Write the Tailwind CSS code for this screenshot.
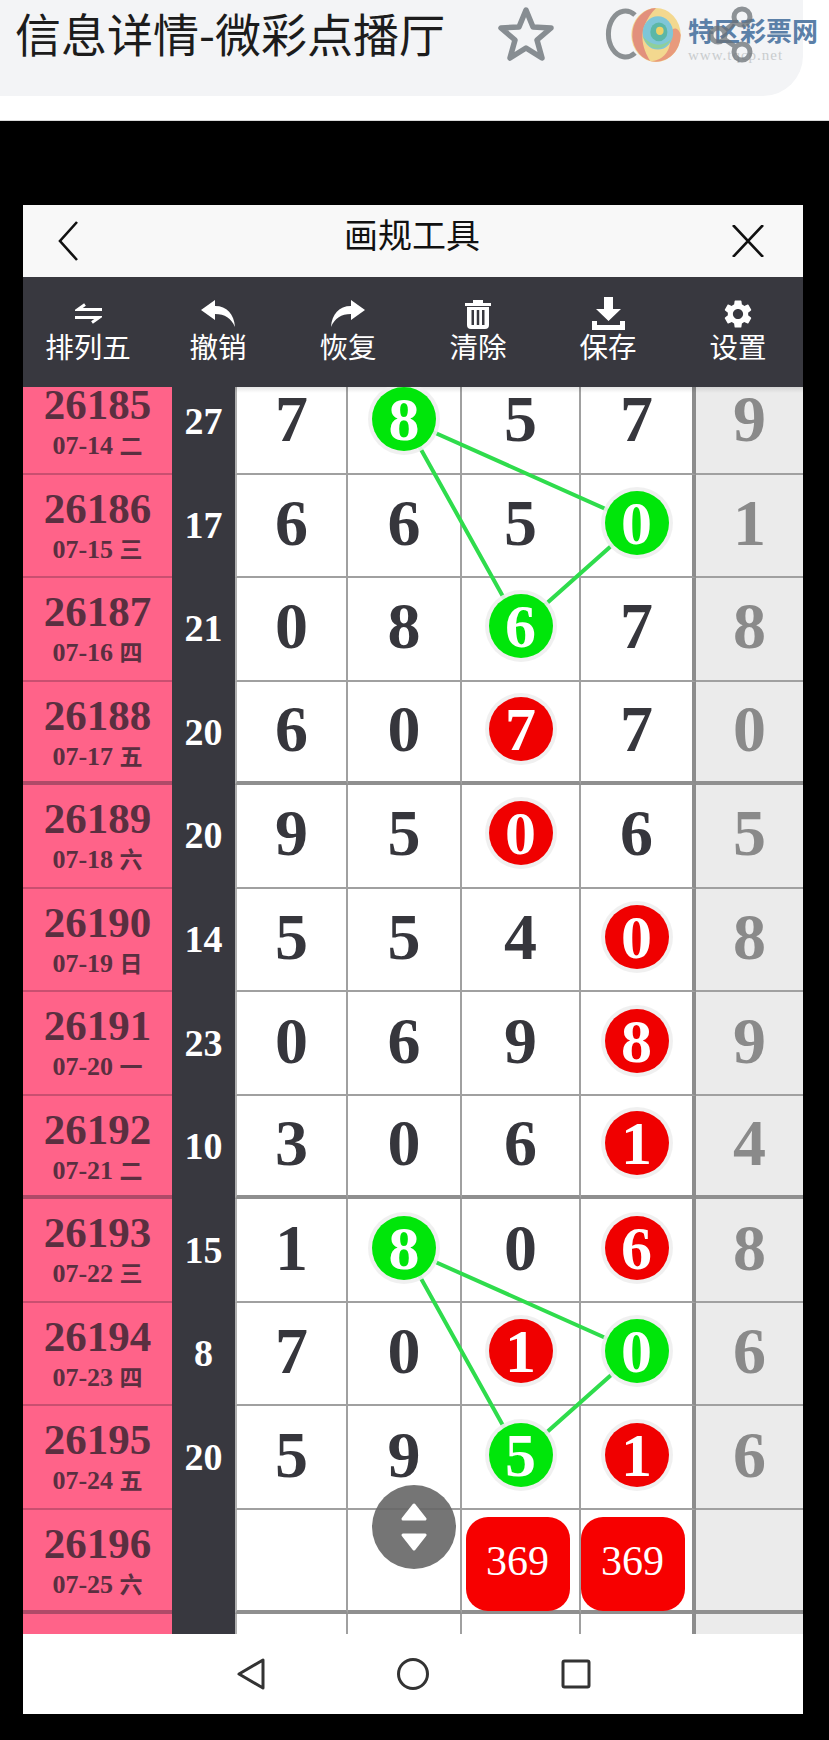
<!DOCTYPE html>
<html lang="zh-CN">
<head>
    <meta charset="UTF-8">
    <title>画规工具</title>
    <script src="https://cdn.jsdelivr.net/npm/@tailwindcss/browser@4"></script>
</head>
<body class="bg-black w-[829px] h-[1740px] overflow-hidden font-['Noto_Sans_CJK_SC',sans-serif]">
    <!-- browser top bar -->
    <div class="bg-white h-[121px] border-b border-[#d9d9d9]">
        <div class="relative bg-[#f3f4f6] h-[96px] w-[803px] rounded-br-[40px] flex items-start">
            <h1 class="shrink-0 ml-[15px] w-[470px] text-[46px] leading-[64px] text-[#1c1c1c] whitespace-nowrap">信息详情-微彩点播厅</h1>
            <svg class="shrink-0 mt-[6px] ml-[12px] w-[58px] h-[56px]" viewBox="0 0 58 56" fill="none" stroke="#878d92" stroke-width="5.5" stroke-linejoin="round">
                <path d="M29 4 L36 21 L54 22 L40 34 L45 52 L29 42 L13 52 L18 34 L4 22 L22 21 Z"/>
            </svg>
            <!-- logo -->
            <svg class="shrink-0 mt-[6px] ml-[47px] w-[86px] h-[58px]" viewBox="0 0 86 58" fill="none">
                <path d="M33 9 A17 23 0 1 0 33 47" stroke="#8b9093" stroke-width="5"/>
                <g transform="translate(54 29) scale(.95 1.04) translate(-56 -29)">
                    <circle cx="56" cy="29" r="26" fill="#f3d88f"/>
                    <path d="M56 3 A26 26 0 0 0 50 54 C42 42 34 24 56 3" fill="#e2907c"/>
                    <path d="M82 29 A26 26 0 0 1 50 54 C64 54 74 42 70 28 C74 20 80 22 82 29" fill="#e89a7c"/>
                    <circle cx="58" cy="27" r="16" fill="#7fc6d8"/>
                    <path d="M42 30 C48 46 66 46 74 30 C68 40 52 42 42 30" fill="#8fcf9a"/>
                    <circle cx="59" cy="26" r="9" fill="#5cb7a6"/>
                    <circle cx="60" cy="25" r="4" fill="#efd267"/>
                </g>
            </svg>
            <div class="shrink-0 mt-[14px] flex flex-col">
                <span class="text-[26px] leading-[32px] font-bold text-[#5b80a8] whitespace-nowrap">特区彩票网</span>
                <span class="text-[15px] leading-[18px] tracking-[1px] text-[#c9ccce] font-['Liberation_Serif',serif]">www.tqcp.net</span>
            </div>
            <!-- share icon sits over the logo -->
            <svg class="absolute left-[708px] top-[5px] w-[50px] h-[60px] opacity-75" viewBox="0 0 50 60" fill="none" stroke="#6c7277" stroke-width="5">
                <circle cx="34" cy="12" r="8"/>
                <circle cx="34" cy="47" r="8"/>
                <circle cx="10" cy="30" r="7"/>
                <path d="M16 26 L28 17 M16 34 L28 42"/>
            </svg>
        </div>
    </div>

    <!-- modal -->
    <div class="mt-[84px] ml-[23px] w-[780px]">
        <div class="h-[72px] bg-[#f8f8f8] flex items-center justify-between pl-[34px] pr-[39px]">
            <svg class="w-[22px] h-[40px]" viewBox="0 0 22 40" fill="none" stroke="#111" stroke-width="2.6"><path d="M20 1 L3 20 L20 39"/></svg>
            <span class="text-[34px] leading-[44px] text-[#111] -mt-[15px] ml-[13px]">画规工具</span>
            <svg class="w-[32px] h-[32px]" viewBox="0 0 32 32" fill="none" stroke="#111" stroke-width="2.6"><path d="M1 0 L31 32 M31 0 L1 32"/></svg>
        </div>

        <div class="h-[110px] bg-[#38383f] grid grid-cols-6 pt-[19px] text-white text-[28.5px] leading-[30px]">
            <div class="flex flex-col items-center">
                <div class="h-[35px] flex items-center">
                    <svg class="w-[27px] h-[21px]" viewBox="0 0 27 21" fill="none" stroke="#fff" stroke-width="3"><path d="M27 6.5 H3 L10 1.5 M0 14.5 H24 L17 19.5"/></svg>
                </div>
                <span>排列五</span>
            </div>
            <div class="flex flex-col items-center">
                <div class="h-[35px] flex items-center">
                    <svg class="w-[34px] h-[27px]" viewBox="0 0 34 27" fill="#fff"><path d="M14 0 L0 10 L14 20 V14 C24 14 30 18 34 27 C33 14 26 6 14 6 Z"/></svg>
                </div>
                <span>撤销</span>
            </div>
            <div class="flex flex-col items-center">
                <div class="h-[35px] flex items-center">
                    <svg class="w-[34px] h-[27px] -scale-x-100" viewBox="0 0 34 27" fill="#fff"><path d="M14 0 L0 10 L14 20 V14 C24 14 30 18 34 27 C33 14 26 6 14 6 Z"/></svg>
                </div>
                <span>恢复</span>
            </div>
            <div class="flex flex-col items-center">
                <div class="h-[35px] flex items-center">
                    <svg class="w-[28px] h-[30px]" viewBox="0 0 28 30" fill="#fff">
                        <path d="M9 4 V1 H19 V4 H27 V7 H1 V4 Z"/>
                        <path fill-rule="evenodd" d="M3 8 H25 V26 A4 4 0 0 1 21 30 H7 A4 4 0 0 1 3 26 Z M7.5 11 V26 H10 V11 Z M12.75 11 V26 H15.25 V11 Z M18 11 V26 H20.5 V11 Z"/>
                    </svg>
                </div>
                <span>清除</span>
            </div>
            <div class="flex flex-col items-center">
                <div class="h-[35px] flex items-center">
                    <svg class="w-[35px] h-[33px]" viewBox="0 0 35 33" fill="#fff">
                        <path d="M13 0 H22 V12 H30 L17.5 24 L5 12 H13 Z"/>
                        <path d="M1 24 H6 V28 H29 V24 H34 V33 H1 Z"/>
                    </svg>
                </div>
                <span>保存</span>
            </div>
            <div class="flex flex-col items-center">
                <div class="h-[35px] flex items-center">
                    <svg class="w-[34px] h-[34px]" viewBox="0 0 24 24" fill="#fff"><path d="M19.14 12.94c.04-.3.06-.61.06-.94 0-.32-.02-.64-.07-.94l2.03-1.58a.49.49 0 0 0 .12-.61l-1.92-3.32a.488.488 0 0 0-.59-.22l-2.39.96c-.5-.38-1.03-.7-1.62-.94l-.36-2.54a.484.484 0 0 0-.48-.41h-3.84c-.24 0-.43.17-.47.41l-.36 2.54c-.59.24-1.13.57-1.62.94l-2.39-.96c-.22-.08-.47 0-.59.22L2.74 8.87c-.12.21-.08.47.12.61l2.03 1.58c-.05.3-.09.63-.09.94s.02.64.07.94l-2.03 1.58a.49.49 0 0 0-.12.61l1.92 3.32c.12.22.37.29.59.22l2.39-.96c.5.38 1.03.7 1.62.94l.36 2.54c.05.24.24.41.48.41h3.84c.24 0 .44-.17.47-.41l.36-2.54c.59-.24 1.13-.56 1.62-.94l2.39.96c.22.08.47 0 .59-.22l1.92-3.32c.12-.22.07-.47-.12-.61l-2.01-1.58zM12 15.6c-1.98 0-3.6-1.62-3.6-3.6s1.62-3.6 3.6-3.6 3.6 1.62 3.6 3.6-1.62 3.6-3.6 3.6z"/></svg>
                </div>
                <span>设置</span>
            </div>
        </div>

        <!-- table, scrolled 16px into the first row -->
        <div class="relative h-[1247px] overflow-hidden bg-white font-['Liberation_Serif','Noto_Sans_CJK_SC',serif] font-bold">
            <div id="rows" class="-mt-[16px]"></div>

            <div class="absolute left-[212px] right-0 top-0 h-[6px] bg-linear-to-b from-black/10 to-transparent"></div>

            <!-- connector lines use page coordinates -->
            <svg class="absolute left-0 top-0 w-[780px] h-[1247px] z-10" viewBox="23 387 780 1247" fill="none" stroke="#2fdc4c" stroke-width="4">
                <path d="M404 419 L637 523 L520 627 Z"/>
                <path d="M404 1248 L637 1352 L520 1456 Z"/>
            </svg>

            <button class="absolute left-[349px] top-[1098px] z-30 w-[84px] h-[84px] rounded-full bg-[#666]/90 flex flex-col items-center justify-center gap-[12px]">
                <svg class="w-[26px] h-[18px]" viewBox="0 0 26 18" fill="#fff" stroke="#fff" stroke-width="3" stroke-linejoin="round"><path d="M13 2 L24 16 H2 Z"/></svg>
                <svg class="w-[26px] h-[18px]" viewBox="0 0 26 18" fill="#fff" stroke="#fff" stroke-width="3" stroke-linejoin="round"><path d="M13 16 L24 2 H2 Z"/></svg>
            </button>
        </div>

        <!-- phone nav -->
        <div class="h-[80px] bg-white flex items-center pl-[214px] gap-[132px]">
            <svg class="w-[28px] h-[32px]" viewBox="0 0 28 32" fill="none" stroke="#333" stroke-width="3" stroke-linejoin="round"><path d="M26 2 V30 L2 16 Z"/></svg>
            <svg class="w-[32px] h-[32px]" viewBox="0 0 32 32" fill="none" stroke="#333" stroke-width="3"><circle cx="16" cy="16" r="14.5"/></svg>
            <svg class="w-[30px] h-[30px]" viewBox="0 0 30 30" fill="none" stroke="#333" stroke-width="3" stroke-linejoin="round"><rect x="2" y="2" width="26" height="26" rx="1.5"/></svg>
        </div>
    </div>

    <script>
        // g = green ball, r = red ball
        const rows = [
            ["26185", "07-14", "二", "27", ["7", "8g", "5", "7", "9"]],
            ["26186", "07-15", "三", "17", ["6", "6", "5", "0g", "1"]],
            ["26187", "07-16", "四", "21", ["0", "8", "6g", "7", "8"]],
            ["26188", "07-17", "五", "20", ["6", "0", "7r", "7", "0"]],
            ["26189", "07-18", "六", "20", ["9", "5", "0r", "6", "5"]],
            ["26190", "07-19", "日", "14", ["5", "5", "4", "0r", "8"]],
            ["26191", "07-20", "一", "23", ["0", "6", "9", "8r", "9"]],
            ["26192", "07-21", "二", "10", ["3", "0", "6", "1r", "4"]],
            ["26193", "07-22", "三", "15", ["1", "8g", "0", "6r", "8"]],
            ["26194", "07-23", "四", "8", ["7", "0", "1r", "0g", "6"]],
            ["26195", "07-24", "五", "20", ["5", "9", "5g", "1r", "6"]],
            ["26196", "07-25", "六", "", ["", "", "369", "369", ""]],
            ["26197", "07-26", "日", "", ["", "", "", "", ""]],
        ];

        function ball(v) {
            const color = v[1] === "g" ? "bg-[#00e60a]" : "bg-[#f00000]";
            return `<span class="relative z-20 w-[64px] h-[64px] rounded-full ${color} shadow-[0_0_0_4px_rgba(238,238,238,0.9)] text-white flex items-center justify-center text-[62px] leading-none">${v[0]}</span>`;
        }

        function cellContent(v, c) {
            if (v === "369") {
                const nudge = c === 2 ? "-translate-x-[3px]" : "-translate-x-[4px]";
                return `<span class="relative z-20 shrink-0 w-[104px] h-[94px] translate-y-[7px] ${nudge} pb-[6px] rounded-[22px] bg-[#f70000] text-white font-normal text-[42px] flex items-center justify-center">369</span>`;
            }
            if (v.length === 2) return ball(v);
            return v;
        }

        document.getElementById("rows").innerHTML = rows.map(([no, date, day, sum, cells], i) => {
            const thick = (i + 1) % 4 === 0;
            const line = thick ? "border-b-[4px] border-[#8f8f8f]" : "border-b-2 border-[#a0a0a0]";
            const pinkLine = thick ? "border-b-[4px] border-[#b04a68]" : "border-b-2 border-[#c94f70]";
            const body = cells.map((v, c) => {
                const cls = c === 4
                    ? "bg-[#ebebeb] text-[#8a8a8a]"
                    : c === 3
                        ? "border-r-[4px] border-r-[#8c8c8c] text-[#36363c]"
                        : c === 0
                            ? "border-l-2 border-l-[#b0b0b0] border-r-2 border-r-[#a0a0a0] text-[#36363c]"
                            : "border-r-2 border-r-[#a0a0a0] text-[#36363c]";
                return `<div class="${cls} ${line} flex items-center justify-center text-[66px] leading-none pb-[5px]">${cellContent(v, c)}</div>`;
            }).join("");
            return `<div class="grid grid-cols-[149px_63px_113px_114px_119px_115px_107px] grid-rows-[103.55px] h-[103.55px]">
                <div class="bg-[#ff6389] ${pinkLine} text-[#5a2f40] text-center pt-[12px]">
                    <div class="text-[43px] leading-[44px]">${no}</div>
                    <div class="text-[26px] leading-[38px]">${date} <span class="text-[23px]">${day}</span></div>
                </div>
                <div class="bg-[#38383f] text-white text-[38px] flex items-center justify-center pb-[2px]">${sum}</div>
                ${body}
            </div>`;
        }).join("");
    </script>
</body>
</html>
